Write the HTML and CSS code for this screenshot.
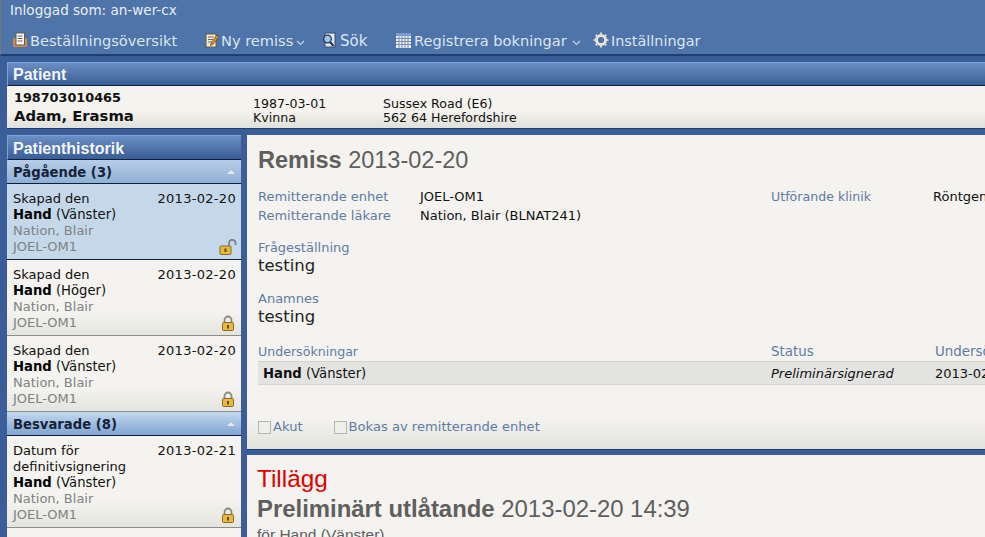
FILE: index.html
```html
<!DOCTYPE html>
<html lang="sv">
<head>
<meta charset="utf-8">
<title>Remiss</title>
<link rel="stylesheet" href="styles.css">
</head>
<body>
<svg class="defs" width="0" height="0" aria-hidden="true">
  <defs>
    <symbol id="lock" viewBox="0 0 14 16">
      <path d="M3.5 8V5a3.5 3.5 0 0 1 7 0v3" fill="none" stroke="#8a8a80" stroke-width="1.8"/>
      <rect x="1.5" y="7.5" width="11" height="8" rx="1" fill="#e6b93f" stroke="#8a6a1e"/>
      <rect x="6" y="10" width="2" height="3.5" fill="#6b4a10"/>
    </symbol>
    <symbol id="unlock" viewBox="0 0 18 16">
      <path d="M10 7V4a3.2 3.2 0 0 1 6.5 0v2" fill="none" stroke="#7c828a" stroke-width="1.8"/>
      <rect x="1" y="7" width="11" height="8.5" rx="1" fill="#e6b93f" stroke="#8a6a1e"/>
      <rect x="5.5" y="9.5" width="2" height="3.5" fill="#6b4a10"/>
    </symbol>
    <symbol id="caret" viewBox="0 0 9 6">
      <path d="M1 1l3.5 3.5L8 1" fill="none" stroke="#c4d3e8" stroke-width="1.2"/>
    </symbol>
  </defs>
</svg>

<header class="top">
  <div class="login">Inloggad som: an-wer-cx</div>
  <nav class="nav">
    <a class="nav-item nav-orders">
      <svg class="ico" viewBox="0 0 16 16"><rect x="1" y="6" width="14" height="9" rx="1.5" fill="#d98a3c"/><rect x="4" y="1" width="8.5" height="12" fill="#fff" stroke="#6b5a48"/><path d="M5.5 4h5M5.5 6.5h5M5.5 9h5" stroke="#5a5a5a"/></svg>
      Beställningsöversikt
    </a>
    <a class="nav-item nav-new">
      <svg class="ico" viewBox="0 0 16 16"><rect x="2" y="2" width="10" height="13" fill="#f6edc8" stroke="#5d5a50"/><path d="M4 5h6M4 7.5h5M4 10h4" stroke="#6a6a6a"/><path d="M7 11l6-8 2 1.5-6 8-2.5 1z" fill="#d9902c" stroke="#4e3a18" stroke-width=".6"/></svg>
      Ny remiss
      <svg class="caret"><use href="#caret"/></svg>
    </a>
    <a class="nav-item nav-search">
      <svg class="ico" viewBox="0 0 16 16"><rect x="4" y="1" width="10" height="14" fill="#dfe6f0" stroke="#39506f"/><circle cx="6.5" cy="7" r="3.8" fill="#9fc2e6" stroke="#24374f" stroke-width="1.3"/><path d="M9 10l3.5 4" stroke="#24374f" stroke-width="2"/></svg>
      Sök
    </a>
    <a class="nav-item nav-book">
      <svg class="ico" viewBox="0 0 16 16"><rect x="1" y="2" width="15" height="14" fill="#e8eef7"/><rect x="1" y="1" width="15" height="3" fill="#7c9ad6"/><path d="M1 6.5h15M1 9.5h15M1 12.5h15M4 4v12M7 4v12M10 4v12M13 4v12" stroke="#7d8fb0"/></svg>
      Registrera bokningar
      <svg class="caret"><use href="#caret"/></svg>
    </a>
    <a class="nav-item nav-settings">
      <svg class="ico" viewBox="0 0 16 16"><circle cx="8" cy="8" r="4.6" fill="none" stroke="#e6e4dc" stroke-width="3"/><path d="M8 .5v15M.5 8h15M2.7 2.7l10.6 10.6M13.3 2.7L2.7 13.3" stroke="#d8d6cc" stroke-width="2" stroke-dasharray="2.4 10.2"/><circle cx="8" cy="8" r="2.6" fill="#4f74a9"/></svg>
      Inställningar
    </a>
  </nav>
</header>

<section class="patient">
  <h2 class="bar">Patient</h2>
  <div class="patient-body">
    <div class="pat-id">
      <div class="pnr">198703010465</div>
      <div class="pname">Adam, Erasma</div>
    </div>
    <div class="pat-col pat-birth">1987-03-01<br>Kvinna</div>
    <div class="pat-col">Sussex Road (E6)<br>562 64 Herefordshire</div>
  </div>
</section>

<div class="content">
  <aside class="side">
    <h2 class="bar bar-side">Patienthistorik</h2>
    <h3 class="group group-a">Pågående (3)<span class="tri"></span></h3>
    <article class="item selected">
      <div class="item-top"><span>Skapad den</span><span class="date">2013-02-20</span></div>
      <div class="item-exam"><b>Hand</b> (Vänster)</div>
      <div class="muted">Nation, Blair</div>
      <div class="muted">JOEL-OM1</div>
      <svg class="lock unlock"><use href="#unlock"/></svg>
    </article>
    <article class="item">
      <div class="item-top"><span>Skapad den</span><span class="date">2013-02-20</span></div>
      <div class="item-exam"><b>Hand</b> (Höger)</div>
      <div class="muted">Nation, Blair</div>
      <div class="muted">JOEL-OM1</div>
      <svg class="lock"><use href="#lock"/></svg>
    </article>
    <article class="item">
      <div class="item-top"><span>Skapad den</span><span class="date">2013-02-20</span></div>
      <div class="item-exam"><b>Hand</b> (Vänster)</div>
      <div class="muted">Nation, Blair</div>
      <div class="muted">JOEL-OM1</div>
      <svg class="lock"><use href="#lock"/></svg>
    </article>
    <h3 class="group group-b">Besvarade (8)<span class="tri"></span></h3>
    <article class="item">
      <div class="item-top"><span>Datum för<br>definitivsignering</span><span class="date">2013-02-21</span></div>
      <div class="item-exam"><b>Hand</b> (Vänster)</div>
      <div class="muted">Nation, Blair</div>
      <div class="muted">JOEL-OM1</div>
      <svg class="lock"><use href="#lock"/></svg>
    </article>
  </aside>

  <main class="main">
    <section class="card card-remiss">
      <h1 class="title"><b>Remiss</b> 2013-02-20</h1>
      <div class="facts">
        <span class="lab">Remitterande enhet</span><span>JOEL-OM1</span>
        <span class="lab lab-tight">Utförande klinik</span><span>Röntgen</span>
        <span class="lab">Remitterande läkare</span><span>Nation, Blair (BLNAT241)</span>
      </div>
      <div class="lab qa-head">Frågeställning</div>
      <div class="qa">testing</div>
      <div class="lab qa-head qa-second">Anamnes</div>
      <div class="qa">testing</div>
      <div class="exam-head lab">
        <span>Undersökningar</span><span class="status">Status</span><span class="status">Undersökningsdatum</span>
      </div>
      <div class="exam-row">
        <span class="exam-name"><b>Hand</b> (Vänster)</span><i>Preliminärsignerad</i><span>2013-02-20</span>
      </div>
      <div class="checks">
        <label class="check lab"><span class="box"></span>Akut</label>
        <label class="check lab"><span class="box"></span>Bokas av remitterande enhet</label>
      </div>
    </section>
    <section class="card card-report">
      <div class="addition">Tillägg</div>
      <h1 class="title report-title"><b>Preliminärt utlåtande</b> 2013-02-20 14:39</h1>
      <div class="for">för Hand (Vänster)</div>
    </section>
  </main>
</div>
</body>
</html>
```
FILE: styles.css
```css
html, body { margin: 0; padding: 0; height: 537px; overflow: hidden; }
body {
  background: #3b5e98;
  font-family: "DejaVu Sans", Verdana, sans-serif;
  font-size: 13px;
  line-height: 16px;
  color: #111;
  width: 985px;
}
.defs { position: absolute; }
.top {
  background: #4f74a9;
  height: 56px;
  border-bottom: 2px solid #1f3f74;
  border-left: 1px solid #777;
  box-sizing: border-box;
  color: #e8eef6;
}
.login { padding: 3px 0 0 9px; height: 21px; box-sizing: border-box; font-size: 13.55px; line-height: 15px; }
.nav { display: flex; padding: 11px 0 0 11px; font-size: 14.6px; line-height: 18px; color: #dbe5f2; }
.nav-item { display: flex; align-items: center; gap: 2px; white-space: nowrap; }
.nav-orders { width: 192px; }
.nav-new { width: 117px; gap: 1px; }
.nav-search { width: 74px; gap: 3px; font-size: 15px; }
.nav-book { width: 198px; gap: 3px; }
.nav-settings { font-size: 14.4px; }
.ico { width: 16px; height: 16px; flex: none; margin-top: -3px; }
.caret { width: 9px; height: 6px; margin: 3px 0 0 2px; }

.patient { margin: 6px 0 0 7px; }
.bar {
  margin: 0;
  background: linear-gradient(#6a8fc4, #3a5d96);
  border-top: 1px solid #7fa3d8;
  border-left: 1px solid #7fa3d8;
  border-bottom: 1px solid #0c1f42;
  color: #f3f6fa;
  font: bold 16px/22px "Liberation Sans", Arial, sans-serif;
  height: 23px;
  padding-left: 5px;
  box-sizing: border-box;
}
.patient .bar { height: 24px; line-height: 23px; }
.patient-body {
  background: linear-gradient(#f5f3ee 60%, #e0e0da);
  height: 43px;
  display: flex;
  box-sizing: border-box;
  border-bottom: 1px solid #1f3f74;
  padding-left: 7px;
}
.pat-id { width: 239px; padding-top: 4px; }
.pnr { font-weight: bold; font-size: 12.8px; line-height: 16px; }
.pname { font-weight: bold; font-size: 14.8px; line-height: 20px; }
.pat-col { padding-top: 11px; line-height: 14px; font-size: 12.6px; }
.pat-birth { width: 130px; }

.content { display: flex; margin: 6px 0 0 7px; gap: 6px; }
.side { width: 234px; flex: none; background: #f4f3ef; }
.bar-side { height: 25px; line-height: 25px; }
.group {
  margin: 0;
  height: 24px;
  padding-left: 6px;
  box-sizing: border-box;
  font-size: 13.2px;
  line-height: 25px;
  font-weight: bold;
  color: #14233a;
  position: relative;
  border-bottom: 1px solid #0c1f42;
}
.group-a { background: linear-gradient(#b8cee6, #8fb0d4); }
.group-b { background: linear-gradient(#c4d8ee, #7fa5d0); }
.tri {
  position: absolute;
  right: 6px;
  top: 10px;
  border: 4px solid transparent;
  border-top: 0;
  border-bottom: 4px solid #e4e9ef;
}
.item {
  position: relative;
  padding: 7px 5px 3px 6px;
  height: 76px;
  box-sizing: border-box;
  background: linear-gradient(#f4f3ef 70%, #e4e4de);
  border-bottom: 1px solid #8a8d8d;
}
.item.selected { background: #c4d8ea; border-bottom: 1px solid #10203c; }
.item:last-child { height: 92px; }
.item-top { display: flex; justify-content: space-between; align-items: flex-start; }
.date { letter-spacing: .3px; }
.item-exam { font-size: 13.2px; }
.item-exam b { color: #000; }
.muted { color: #7f8285; }
.lock { position: absolute; right: 6px; bottom: 4px; width: 14px; height: 16px; }
.unlock { width: 18px; right: 4px; }

.main { flex: 1; min-width: 0; }
.card { background: #f4f3ef; overflow: hidden; }
.card-remiss {
  height: 315px;
  padding: 11px 0 0 11px;
  box-sizing: border-box;
  background: linear-gradient(#f4f3ef 90%, #e3e3de);
  border-bottom: 1px solid #1f3f74;
}
.card-report { margin-top: 5px; padding: 10px 0 0 10px; height: 100px; }
.title { margin: 0; font: 23.5px/28px "Liberation Sans", Arial, sans-serif; color: #5f5f5f; }
.facts {
  display: grid;
  grid-template-columns: 162px 351px 162px 1fr;
  margin-top: 13px;
  line-height: 19px;
  white-space: nowrap;
}
.lab { color: #5f7ba8; }
.lab-tight { font-size: 12.6px; }
.qa-head { margin-top: 15px; line-height: 16px; }
.qa-second { margin-top: 15px; }
.qa { font-size: 16.5px; line-height: 20px; color: #222; }
.exam-head, .exam-row {
  display: grid;
  grid-template-columns: 513px 164px 200px;
  white-space: nowrap;
}
.exam-head { margin-top: 16px; line-height: 18px; font-size: 12.6px; }
.status { font-size: 13.4px; }
.exam-row {
  background: #e3e3e1;
  height: 24px;
  line-height: 23px;
  box-sizing: border-box;
  border-top: 1px solid #d4d4d2;
  border-bottom: 1px solid #d4d4d2;
  padding-left: 5px;
  grid-template-columns: 508px 164px 200px;
}
.exam-name { font-size: 13.2px; }
.checks { display: flex; gap: 31px; margin-top: 34px; line-height: 16px; }
.check { display: flex; align-items: center; gap: 2px; font-size: 13.1px; }
.box { width: 11px; height: 11px; border: 1px solid #b4b4b0; background: #eeeeea; }
.addition { font: 24.3px/28px "Liberation Sans", Arial, sans-serif; color: #e00000; }
.report-title { margin-top: 2px; font-size: 23.9px; }
.for { font: 15.5px/18px "Liberation Sans", Arial, sans-serif; color: #5f5f5f; margin-top: 3px; }
```
